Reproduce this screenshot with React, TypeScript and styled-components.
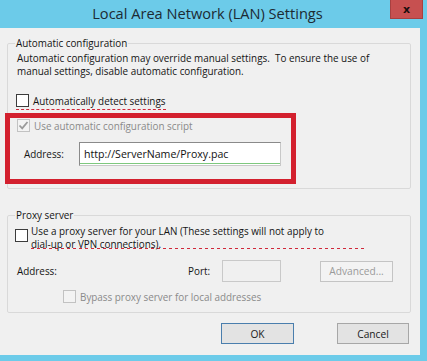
import React from "react";
import styled, { createGlobalStyle } from "styled-components";

const Global = createGlobalStyle`
  html, body { margin: 0; padding: 0; background: #6ccbe9; }
  body { font-family: "Open Sans", "Noto Sans", sans-serif; }
`;

const Window = styled.div`
  width: 427px;
  height: 361px;
  background: #6ccbe9;
  display: flex;
  flex-direction: column;
  box-sizing: border-box;
  padding: 0 7px 6px 0;
`;

const TitleBar = styled.div`
  height: 28px;
  display: flex;
  align-items: flex-start;
`;

const Title = styled.div`
  flex: 1;
  text-align: center;
  padding-left: 25px;
  padding-top: 4px;
  font-size: 14.6px;
  line-height: 18px;
  color: #1c2a33;
`;

const CloseButton = styled.div`
  width: 33px;
  height: 19px;
  margin-right: -3px;
  box-sizing: border-box;
  background: #c75050;
  border: 1px solid #a84040;
  border-top: none;
  display: flex;
  align-items: center;
  justify-content: center;
  font-family: "DejaVu Sans", sans-serif;
  font-weight: bold;
  font-size: 11px;
  color: #1a0d0d;
`;

const Client = styled.div`
  flex: 1;
  background: #f0f0f0;
  box-sizing: border-box;
  padding: 8px 9px 0 7px;
  font-size: 9.9px;
  line-height: 12px;
  color: #141414;
`;

const Group = styled.fieldset<{ $mt?: number; $pb: number }>`
  margin: ${(p) => p.$mt ?? 0}px 0 0 0;
  padding: 0 8px ${(p) => p.$pb}px 8px;
  border: 1px solid #d9d9d9;
  border-radius: 2px;
  min-width: 0;
`;

const Legend = styled.legend`
  padding: 0 1px;
  margin-left: -1px;
  line-height: 14px;
`;

const Description = styled.p`
  margin: 2px 0 0 1px;
  line-height: 13px;
`;

const CheckRow = styled.label<{
  $mt: number;
  $ml?: number;
  $gap?: number;
  $top?: boolean;
  $dashed?: boolean;
  $disabled?: boolean;
}>`
  display: flex;
  align-items: ${(p) => (p.$top ? "flex-start" : "center")};
  gap: ${(p) => p.$gap ?? 4}px;
  width: max-content;
  margin: ${(p) => p.$mt}px 0 0 ${(p) => p.$ml ?? 0}px;
  padding-bottom: ${(p) => (p.$dashed ? 2 : 0)}px;
  border-bottom: ${(p) => (p.$dashed ? "1px dashed #d0283a" : "none")};
  color: ${(p) => (p.$disabled ? "#8a8a8a" : "inherit")};
`;

const Box = styled.span<{ $disabled?: boolean; $mt?: number }>`
  width: 13px;
  height: 13px;
  margin-top: ${(p) => p.$mt ?? 0}px;
  box-sizing: border-box;
  flex: none;
  background: ${(p) => (p.$disabled ? "#f3f3f3" : "#fff")};
  border: 1px solid ${(p) => (p.$disabled ? "#c2c2c2" : "#3c3c3c")};
  display: flex;
  align-items: center;
  justify-content: center;
`;

const Highlight = styled.div`
  margin: 3px 0 0 -11px;
  width: 291px;
  height: 71px;
  box-sizing: border-box;
  border: 5px solid #d3202e;
  padding: 1px 0 0 7px;
`;

const FieldRow = styled.div<{ $mt: number; $pl: number }>`
  display: flex;
  align-items: center;
  margin-top: ${(p) => p.$mt}px;
  padding-left: ${(p) => p.$pl}px;
`;

const Label = styled.span<{ $w: number }>`
  width: ${(p) => p.$w}px;
  flex: none;
`;

const TextBox = styled.div`
  width: 202px;
  height: 24px;
  box-sizing: border-box;
  background: #fff;
  border: 1px solid #8a8a8a;
  border-right-color: #c8c8c8;
  border-bottom-color: #c8c8c8;
  padding: 0 4px;
  display: flex;
  align-items: center;
  box-shadow: inset 0 -1px 0 #fff, inset 0 -2px 0 #7ec87e;
  font-size: 10.6px;
  color: #111;
`;

const PortBox = styled.div`
  width: 59px;
  height: 22px;
  box-sizing: border-box;
  background: #f0f0f0;
  border: 1px solid #c9c9c9;
`;

const ProxyText = styled.div`
  width: 335px;
  line-height: 13px;
  padding-bottom: 1px;
  background: repeating-linear-gradient(to right, #d0283a 0 3px, transparent 3px 6px) left bottom 3px / 100% 1px
    no-repeat;
`;

const Spacer = styled.span<{ $w: number }>`
  width: ${(p) => p.$w}px;
  flex: none;
`;

const Button = styled.div<{ $w: number; $variant?: "default" | "disabled" }>`
  width: ${(p) => p.$w}px;
  height: 21px;
  box-sizing: border-box;
  display: flex;
  align-items: center;
  justify-content: center;
  background: ${(p) => (p.$variant === "disabled" ? "#f3f3f3" : "#e3e3e3")};
  border: 1px solid
    ${(p) => (p.$variant === "default" ? "#4a7ead" : p.$variant === "disabled" ? "#c4c4c4" : "#a7a7a7")};
  color: ${(p) => (p.$variant === "disabled" ? "#9a9a9a" : "#1a1a1a")};
  font-size: 10.2px;
`;

const Buttons = styled.div`
  display: flex;
  justify-content: flex-end;
  gap: 43px;
  margin-top: 10px;
  padding-right: 2px;
`;

const Check = ({ color }: { color: string }) => (
  <svg width="11" height="11" viewBox="0 0 11 11">
    <path d="M1.5 5.5 L4.2 8.3 L9.5 2" fill="none" stroke={color} strokeWidth="1.8" />
  </svg>
);

export default function App() {
  return (
    <>
      <Global />
      <Window>
        <TitleBar>
          <Title>Local Area Network (LAN) Settings</Title>
          <CloseButton>x</CloseButton>
        </TitleBar>
        <Client>
          <Group $pb={4}>
            <Legend>Automatic configuration</Legend>
            <Description>
              Automatic configuration may override manual settings.&nbsp; To ensure the use of
              <br />
              manual settings, disable automatic configuration.
            </Description>
            <CheckRow $mt={16} $dashed>
              <Box />
              <span>Automatically detect settings</span>
            </CheckRow>
            <Highlight>
              <CheckRow $mt={0} $disabled>
                <Box $disabled>
                  <Check color="#9a9a9a" />
                </Box>
                <span>Use automatic configuration script</span>
              </CheckRow>
              <FieldRow $mt={10} $pl={7}>
                <Label $w={55}>Address:</Label>
                <TextBox>http://ServerName/Proxy.pac</TextBox>
              </FieldRow>
            </Highlight>
          </Group>
          <Group $mt={19} $pb={9}>
            <Legend>Proxy server</Legend>
            <CheckRow $mt={3} $ml={-1} $gap={3} $top>
              <Box $mt={4} />
              <ProxyText>
                Use a proxy server for your LAN (These settings will not apply to
                <br />
                dial-up or VPN connections).
              </ProxyText>
            </CheckRow>
            <FieldRow $mt={8} $pl={1}>
              <Label $w={171}>Address:</Label>
              <Label $w={34}>Port:</Label>
              <PortBox />
              <Spacer $w={39} />
              <Button $w={73} $variant="disabled">Advanced...</Button>
            </FieldRow>
            <CheckRow $mt={8} $ml={47} $disabled>
              <Box $disabled />
              <span>Bypass proxy server for local addresses</span>
            </CheckRow>
          </Group>
          <Buttons>
            <Button $w={73} $variant="default">OK</Button>
            <Button $w={72}>Cancel</Button>
          </Buttons>
        </Client>
      </Window>
    </>
  );
}
